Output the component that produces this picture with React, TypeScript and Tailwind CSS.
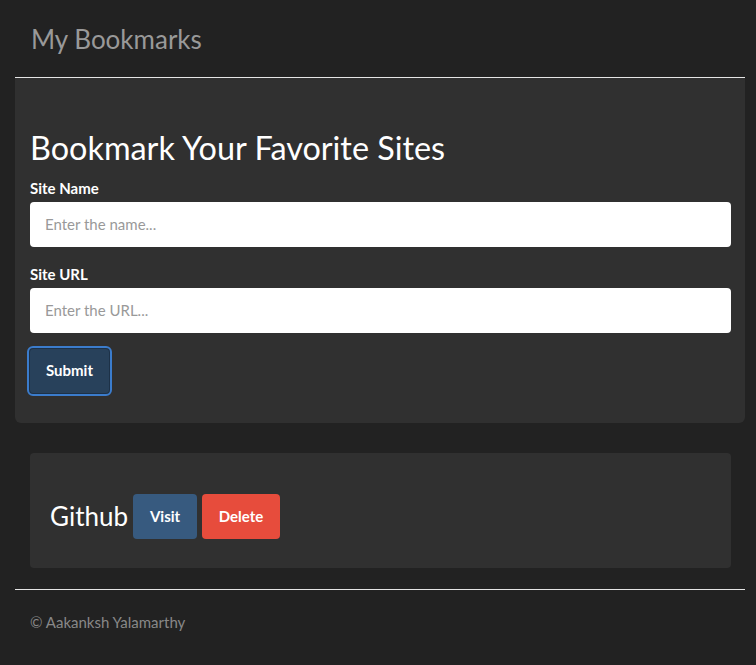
const sites = [{ name: 'Github', url: 'https://github.com' }];

export default function App() {
  return (
    <div className="min-h-screen bg-[#222222] font-['Lato','Open_Sans',sans-serif] text-[15px] text-white">
      <div className="ml-[15px] w-[730px]">
        <header className="h-[78px] border-b border-[#e5e5e5] px-[16px] pt-[25px]">
          <h3 className="text-[26px] leading-[1.1] text-[#999999]">My Bookmarks</h3>
        </header>

        <div className="rounded-b-[6px] bg-[#303030] px-[15px] pt-[52px] pb-[29px]">
          <h2 className="mb-[13px] text-[32.4px] leading-[1.1] font-normal">Bookmark Your Favorite Sites</h2>
          <form className="flex flex-col">
            <label className="mb-[5px] text-[15px] font-bold leading-[18px]">Site Name</label>
            <input
              className="mb-[18px] h-[45px] w-[701px] rounded-[4px] bg-white px-[15px] text-[15px] text-[#464545] placeholder:text-[#999999]"
              placeholder="Enter the name..."
            />
            <label className="mb-[5px] text-[15px] font-bold leading-[18px]">Site URL</label>
            <input
              className="mb-[15px] h-[45px] w-[701px] rounded-[4px] bg-white px-[15px] text-[15px] text-[#464545] placeholder:text-[#999999]"
              placeholder="Enter the URL..."
            />
            <div>
              <button
                type="button"
                className="-ml-[1px] h-[46px] w-[81px] rounded-[4px] border border-[#1d3147] bg-[#28415b] text-[15px] font-bold text-white outline-2 outline-[#3b7ccc]"
              >
                Submit
              </button>
            </div>
          </form>
        </div>

        <div className="px-[15px] pt-[30px] pb-[21px]">
          {sites.map((site) => (
            <div key={site.name} className="flex h-[115px] w-[701px] items-center rounded-[4px] bg-[#303030] px-[20px] pt-[12px]">
              <h3 className="text-[26px] leading-[1.1]">{site.name}</h3>
              <a className="ml-[5px] flex h-[45px] w-[64px] items-center justify-center rounded-[4px] bg-[#375a7f] font-bold">
                Visit
              </a>
              <a className="ml-[5px] flex h-[45px] w-[78px] items-center justify-center rounded-[4px] bg-[#e74c3c] font-bold">
                Delete
              </a>
            </div>
          ))}
        </div>

        <footer className="border-t border-[#e5e5e5] px-[15px] pt-[21px]">
          <p className="text-[15px] text-[#888888]">© Aakanksh Yalamarthy</p>
        </footer>
      </div>
    </div>
  );
}
